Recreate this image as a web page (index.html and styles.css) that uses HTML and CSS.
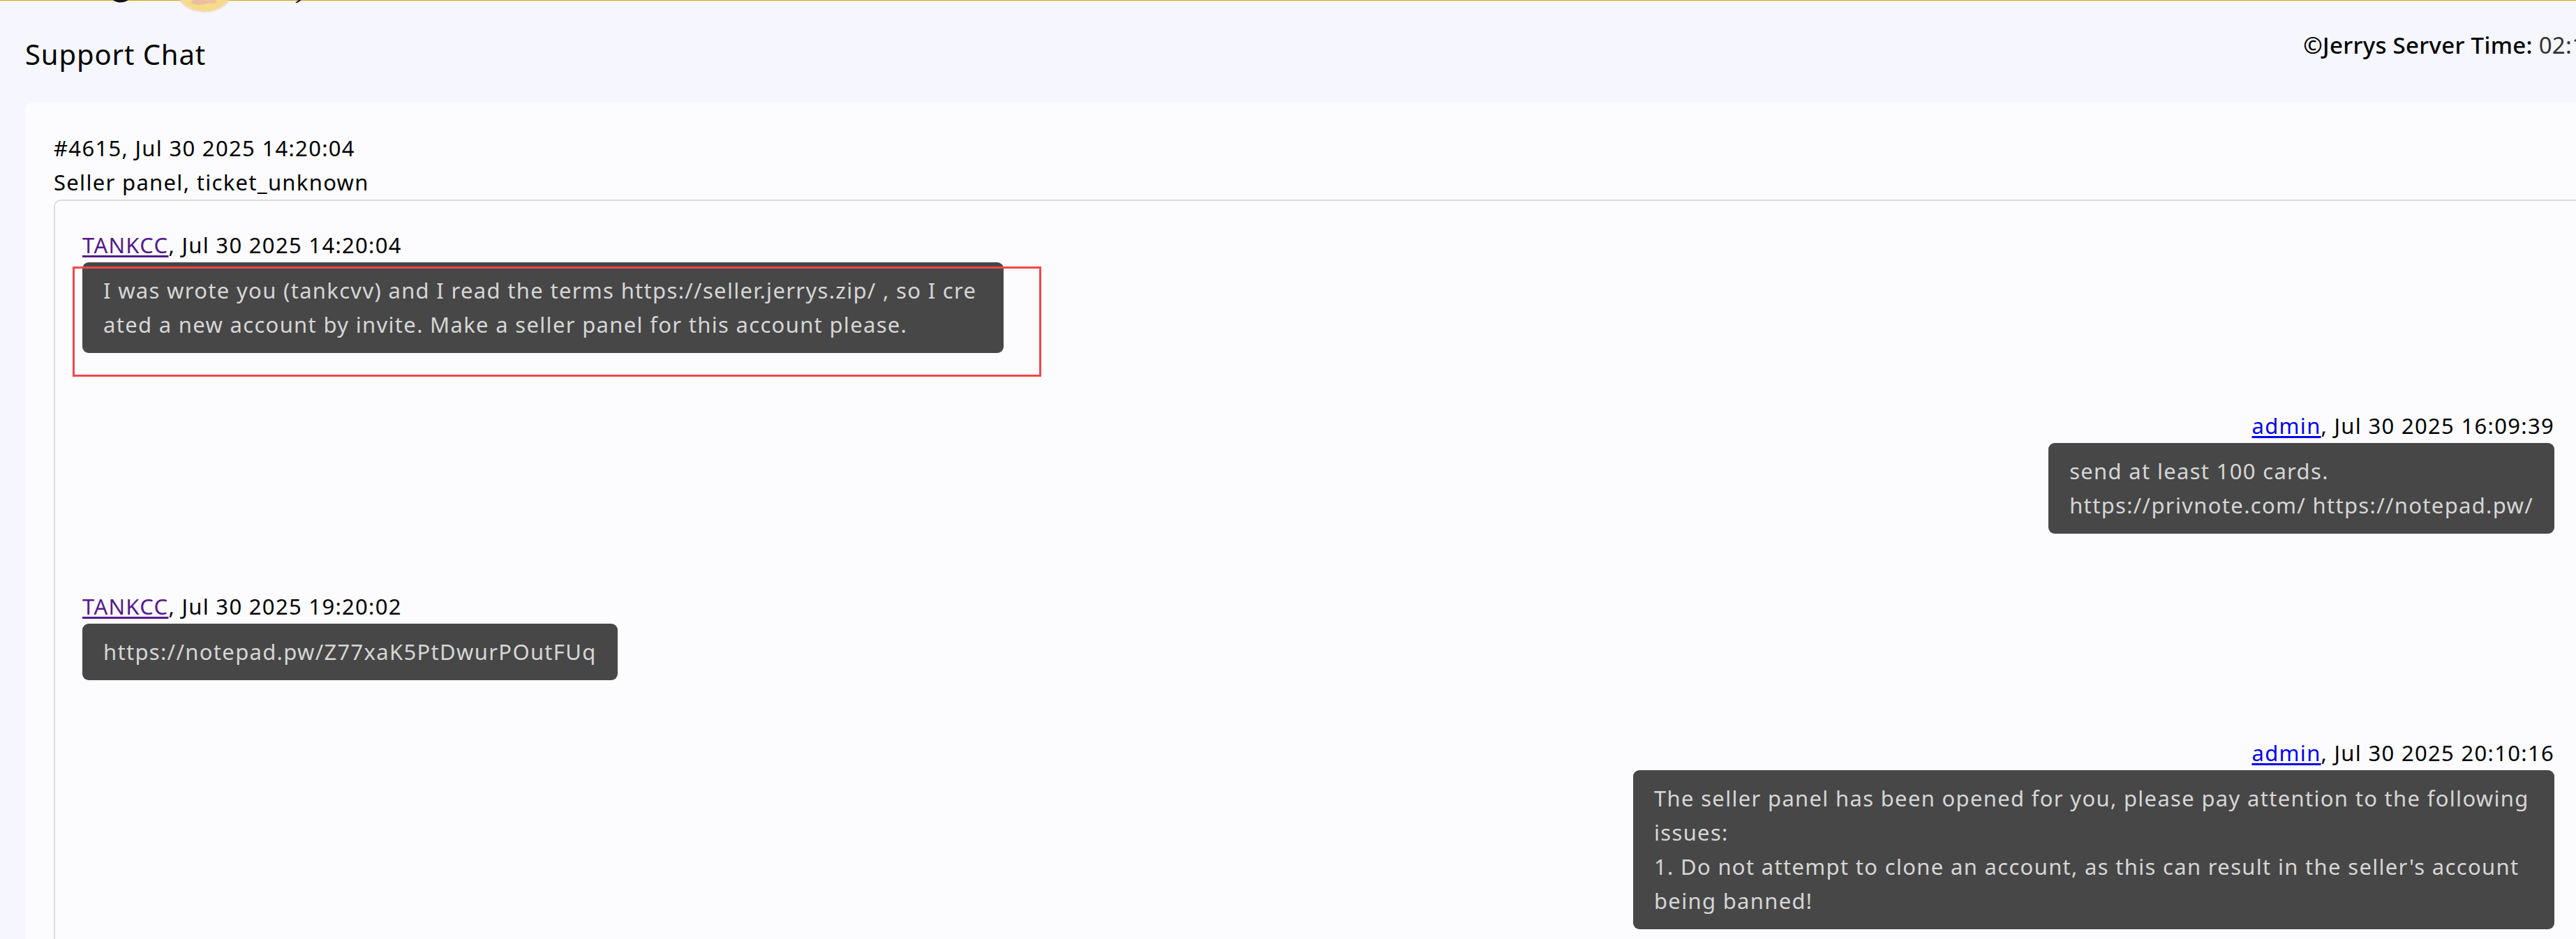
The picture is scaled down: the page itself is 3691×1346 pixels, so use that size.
FILE: index.html
```html
<!DOCTYPE html>
<html>
<head>
<meta charset="utf-8">
<title>Support Chat</title>
<link rel="stylesheet" href="styles.css">
</head>
<body>
<div class="topbar">
  <svg class="logo-tail" width="500" height="24" viewBox="0 0 500 24" aria-hidden="true">
    <path d="M162 0 L184 0 Q179 3.5 171 3.5 Q165 2.5 162 0 Z" fill="#111"/>
    <ellipse cx="293" cy="-14" rx="41" ry="32" fill="#f0c9ae" opacity="0.55"/>
    <ellipse cx="293" cy="-14" rx="38" ry="30" fill="#f6dc8a"/>
    <ellipse cx="286" cy="3" rx="12" ry="4" fill="#eab7a2" opacity="0.8"/>
    <ellipse cx="303" cy="2" rx="8" ry="3" fill="#eab7a2" opacity="0.7"/>
    <path d="M423 4 L428 0 L432 0 L426 4 Z" fill="#111"/>
  </svg>
</div>
<div class="page">
  <header class="page-head">
    <h1 class="page-title">Support Chat</h1>
    <div class="server-time"><span class="server-label">©Jerrys Server Time:</span> <span class="server-clock">02:14:37</span></div>
  </header>

  <section class="card">
    <div class="ticket-line">#4615, Jul 30 2025 14:20:04</div>
    <div class="ticket-line">Seller panel, ticket_unknown</div>

    <div class="thread">
      <div class="msg msg-left">
        <div class="msg-meta"><a class="user user-visited" href="#">TANKCC</a>, Jul 30 2025 14:20:04</div>
        <div class="bubble">I was wrote you (tankcvv) and I read the terms https://seller.jerrys.zip/ , so I created a new account by invite. Make a seller panel for this account please.</div>
        <div class="highlight"></div>
      </div>

      <div class="msg msg-right">
        <div class="msg-meta"><a class="user user-link" href="#">admin</a>, Jul 30 2025 16:09:39</div>
        <div class="bubble">send at least 100 cards.<br>https://privnote.com/ https://notepad.pw/</div>
      </div>

      <div class="msg msg-left">
        <div class="msg-meta"><a class="user user-visited" href="#">TANKCC</a>, Jul 30 2025 19:20:02</div>
        <div class="bubble">https://notepad.pw/Z77xaK5PtDwurPOutFUq</div>
      </div>

      <div class="msg msg-right">
        <div class="msg-meta"><a class="user user-link" href="#">admin</a>, Jul 30 2025 20:10:16</div>
        <div class="bubble">The seller panel has been opened for you, please pay attention to the following issues:<br>1. Do not attempt to clone an account, as this can result in the seller's account being banned!</div>
      </div>
    </div>
  </section>
</div>
</body>
</html>
```
FILE: styles.css
```css
html, body {
  margin: 0;
  padding: 0;
  overflow: hidden;
}

body {
  background: #f5f6fe;
  font-family: "Noto Sans", "Open Sans", sans-serif;
  color: #000;
  font-size: 31px;
  line-height: 49px;
  letter-spacing: 1.31px;
}

.topbar {
  position: relative;
  height: 1px;
  background: #d9a000;
}

.logo-tail {
  position: absolute;
  left: 0;
  top: 0;
  overflow: visible;
}

.page {
  width: 3706px;
  padding: 0 36px;
}

.page-head {
  display: flex;
  justify-content: space-between;
  align-items: flex-start;
  padding: 41px 0 41px;
}

.page-title {
  margin: 8px 0 0;
  font-size: 40px;
  line-height: 56px;
  font-weight: 400;
  letter-spacing: 0.9px;
}

.server-time {
  margin-right: -29px;
  font-size: 33px;
  line-height: 46px;
  letter-spacing: 0.3px;
  white-space: nowrap;
}

.server-label {
  font-weight: 500;
  color: #000;
}

.server-clock {
  color: #333;
}

.card {
  background: #fcfcff;
  border-radius: 10px;
  padding: 41px;
}

.thread {
  border: 2px solid #d9dede;
  border-radius: 10px;
  padding: 39px;
  display: flex;
  flex-direction: column;
  gap: 80px;
}

.msg {
  position: relative;
  display: flex;
  flex-direction: column;
}

.msg-left {
  align-items: flex-start;
}

.msg-right {
  align-items: flex-end;
}

.user {
  text-decoration: underline;
  text-underline-offset: 3px;
}

.user-visited {
  color: #551a8b;
}

.user-link {
  color: #0000ee;
}

.bubble {
  background: #474747;
  color: #d6d6d6;
  border-radius: 9px;
  padding: 16px 30px;
  max-width: 1260px;
  word-break: break-all;
}

.highlight {
  position: absolute;
  left: -14px;
  top: 55px;
  width: 1388px;
  height: 158px;
  box-sizing: border-box;
  border: 3px solid #f24848;
  pointer-events: none;
}
```
